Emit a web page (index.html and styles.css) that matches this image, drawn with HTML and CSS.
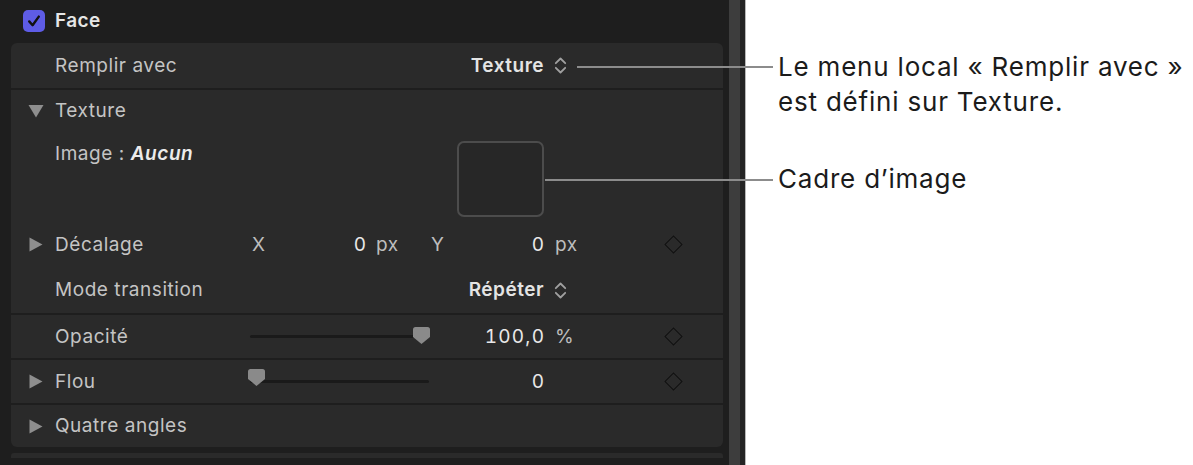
FILE: index.html
```html
<!DOCTYPE html>
<html lang="fr">
<head>
<meta charset="utf-8">
<title>Face – Texture</title>
<link rel="stylesheet" href="styles.css">
</head>
<body>
<div class="page">
  <div class="inspector">
    <div class="head">
      <span class="check">
        <svg width="22" height="22" viewBox="0 0 22 22"><path d="M6.2 11.4 L9.6 15.2 L15.8 6.6" fill="none" stroke="#111" stroke-width="2.4" stroke-linecap="round" stroke-linejoin="round"/></svg>
      </span>
      <span class="head-title">Face</span>
    </div>
    <div class="panel">
      <div class="row r-fill">
        <span class="gut"></span>
        <span class="label">Remplir avec</span>
        <span class="popup-val">Texture</span>
        <span class="popup-chev"><svg width="13" height="19" viewBox="0 0 13 19"><path d="M1.8 7.2 L6.5 2.5 L11.2 7.2 M1.8 11.8 L6.5 16.5 L11.2 11.8" fill="none" stroke="#a0a0a0" stroke-width="1.8" stroke-linecap="round" stroke-linejoin="round"/></svg></span>
      </div>
      <div class="group">
        <div class="row r-head">
          <span class="gut"><svg class="tri-down" width="16" height="14" viewBox="0 0 16 14"><path d="M0.5 1 H15.5 L8 13.5 Z" fill="#8e8e8e"/></svg></span>
          <span class="label">Texture</span>
        </div>
        <div class="row r-image">
          <span class="gut"></span>
          <span class="label">Image : <em class="none">Aucun</em></span>
          <span class="frame"></span>
        </div>
        <div class="row r-offset">
          <span class="gut"><svg class="tri-right" width="14" height="15" viewBox="0 0 14 15"><path d="M0.5 0.5 V14.5 L13.5 7.5 Z" fill="#8e8e8e"/></svg></span>
          <span class="label">Décalage</span>
          <span class="pair"><span class="axis">X</span><span class="num">0</span></span>
          <span class="unit u1">px</span>
          <span class="pair"><span class="axis">Y</span><span class="num">0</span></span>
          <span class="unit">px</span>
          <span class="key"><i></i></span>
        </div>
        <div class="row r-mode">
          <span class="gut"></span>
          <span class="label">Mode transition</span>
          <span class="popup-val">Répéter</span>
          <span class="popup-chev"><svg width="13" height="19" viewBox="0 0 13 19"><path d="M1.8 7.2 L6.5 2.5 L11.2 7.2 M1.8 11.8 L6.5 16.5 L11.2 11.8" fill="none" stroke="#a0a0a0" stroke-width="1.8" stroke-linecap="round" stroke-linejoin="round"/></svg></span>
        </div>
      </div>
      <div class="row sep">
        <span class="gut"></span>
        <span class="label">Opacité</span>
        <span class="slider"><span class="track"></span><span class="thumb thumb-max"><svg width="17" height="17" viewBox="0 0 17 17"><path d="M2.5 0 H14.5 Q17 0 17 2.5 V10 L8.5 17 L0 10 V2.5 Q0 0 2.5 0 Z" fill="#8a8a8a"/></svg></span></span>
        <span class="num value">100,0</span>
        <span class="unit">%</span>
        <span class="key"><i></i></span>
      </div>
      <div class="row sep">
        <span class="gut"><svg class="tri-right" width="14" height="15" viewBox="0 0 14 15"><path d="M0.5 0.5 V14.5 L13.5 7.5 Z" fill="#8e8e8e"/></svg></span>
        <span class="label">Flou</span>
        <span class="slider"><span class="track"></span><span class="thumb thumb-min"><svg width="17" height="17" viewBox="0 0 17 17"><path d="M2.5 0 H14.5 Q17 0 17 2.5 V10 L8.5 17 L0 10 V2.5 Q0 0 2.5 0 Z" fill="#8a8a8a"/></svg></span></span>
        <span class="num value">0</span>
        <span class="key"><i></i></span>
      </div>
      <div class="row sep r-last">
        <span class="gut"><svg class="tri-right" width="14" height="15" viewBox="0 0 14 15"><path d="M0.5 0.5 V14.5 L13.5 7.5 Z" fill="#8e8e8e"/></svg></span>
        <span class="label">Quatre angles</span>
      </div>
    </div>
    <div class="next-panel"></div>
  </div>
  <div class="scroll-track"></div>
  <div class="scroll-edge"></div>
  <div class="notes">
    <p class="note note1">Le menu local « Remplir avec »<br>est défini sur Texture.</p>
    <p class="note note2">Cadre d’image</p>
  </div>
  <div class="leader leader1"></div>
  <div class="leader leader2"></div>
</div>
</body>
</html>
```

FILE: styles.css
```css
* { box-sizing: border-box; }

html, body {
  margin: 0;
  padding: 0;
  background: #ffffff;
}

.page {
  position: relative;
  display: flex;
  width: 1193px;
  height: 465px;
  overflow: hidden;
  font-family: Inter, "Noto Sans", "Liberation Sans", sans-serif;
}

.inspector {
  width: 729px;
  flex: none;
  background: #1e1e1e;
  padding: 0 6px 0 11px;
}

.head {
  height: 43px;
  display: flex;
  align-items: center;
  padding-left: 12px;
  gap: 10px;
  padding-bottom: 2px;
}

.check {
  width: 22px;
  height: 22px;
  border-radius: 5px;
  background: #5e5ce6;
  display: flex;
}

.head-title {
  color: #e6e6e6;
  font-size: 19px;
  font-weight: 600;
  line-height: 22px;
  letter-spacing: 0.4px;
}

.panel {
  background: #2a2a2a;
  border-radius: 6px;
  overflow: hidden;
}

.row {
  display: grid;
  grid-template-columns: 44px 197px 114px 65px 113px 87px 1fr;
  align-items: center;
  height: 45px;
  font-size: 19px;
  line-height: 22px;
  letter-spacing: 0.55px;
  color: #c4c4c4;
}

.group {
  border-top: 2px solid #1e1e1e;
}

.sep {
  border-top: 2px solid #1e1e1e;
}

.r-head { height: 43px; padding-bottom: 1px; }
.r-image { height: 89px; align-items: start; }
.r-mode { height: 46px; }
.r-last { height: 44px; }

.gut {
  grid-column: 1;
  display: flex;
  align-items: center;
}

.tri-right { margin-left: 18px; }
.tri-down { margin-left: 17px; }

.label {
  grid-column: 2;
  white-space: nowrap;
}

.r-image .label { padding-top: 10px; }

.none {
  font-style: italic;
  font-weight: 600;
  color: #ececec;
}

.popup-val {
  grid-column: 5;
  justify-self: end;
  color: #e4e4e4;
  font-weight: 600;
  letter-spacing: 0.5px;
}

.popup-chev {
  grid-column: 6;
  padding-left: 10px;
  display: flex;
  align-items: center;
}

.frame {
  grid-column: 5;
  justify-self: end;
  margin-top: 8px;
  width: 87px;
  height: 76px;
  border: 2px solid #4c4c4c;
  border-radius: 7px;
  background: #272727;
}

.pair {
  display: flex;
  justify-content: space-between;
}

.axis { color: #bdbdbd; }

.num {
  color: #e8e8e8;
  font-variant-numeric: tabular-nums;
  letter-spacing: 1.2px;
  margin-right: -1.2px;
}

.value {
  grid-column: 5;
  justify-self: end;
}

.unit {
  padding-left: 11px;
  color: #bdbdbd;
}

.unit.u1 { padding-left: 10px; }

.key {
  grid-column: 7;
  margin-left: 33px;
  width: 18px;
  height: 18px;
  display: flex;
  align-items: center;
  justify-content: center;
}

.key i {
  display: block;
  width: 13px;
  height: 13px;
  flex: none;
  border: 1.6px solid #111111;
  transform: rotate(45deg);
}

.slider {
  grid-column: 3 / 5;
  position: relative;
  width: 179px;
  height: 17px;
  margin-left: -2px;
}

.track {
  position: absolute;
  left: 0;
  right: 0;
  top: 7px;
  height: 3px;
  border-radius: 2px;
  background: #1a1a1a;
}

.thumb {
  position: absolute;
  top: -1px;
  width: 17px;
  height: 17px;
  display: flex;
}

.thumb-max { left: 163px; }
.thumb-min { left: -2px; top: -4px; }

.next-panel {
  margin-top: 6px;
  height: 5px;
  background: #2a2a2a;
  border-radius: 3px 3px 0 0;
}

.scroll-track {
  width: 11px;
  flex: none;
  background: #3d3d3d;
}

.scroll-edge {
  width: 6px;
  flex: none;
  background: #242424;
  border-right: 1px solid #b8b8b8;
}

.notes {
  flex: 1;
  background: #ffffff;
  padding: 49px 0 0 32px;
  color: #1b1b1b;
  font-size: 26px;
  line-height: 35px;
  letter-spacing: 0.8px;
}

.note { margin: 0; white-space: nowrap; }

.note2 { margin-top: 42px; }

.leader {
  position: absolute;
  height: 2px;
  background: #8c8c8c;
}

.leader1 { left: 577px; top: 66px; width: 196px; }
.leader2 { left: 545px; top: 179px; width: 228px; }
```
